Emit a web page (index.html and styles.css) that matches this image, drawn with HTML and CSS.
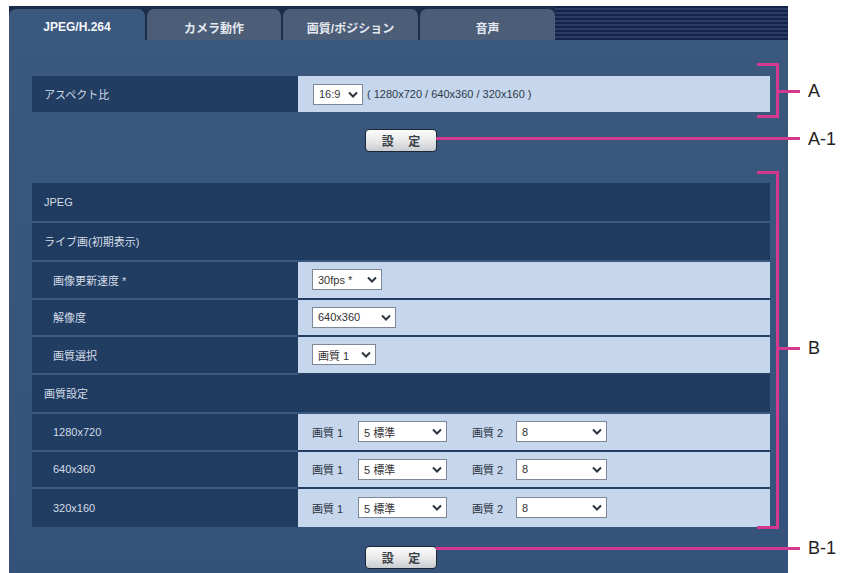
FILE: index.html
```html
<!DOCTYPE html>
<html lang="ja">
<head>
  <meta charset="UTF-8">
  <meta name="viewport" content="width=device-width, initial-scale=1.0">
  <title>JPEG/H.264 設定</title>
  <link rel="stylesheet" href="styles.css">
</head>
<body>
  <div class="page">
    <div class="panel">
      <div class="tabs">
        <div class="tab active">JPEG/H.264</div>
        <div class="tab">カメラ動作</div>
        <div class="tab">画質/ポジション</div>
        <div class="tab">音声</div>
        <div class="stripes"></div>
      </div>

      <div class="body">
        <!-- A: アスペクト比 -->
        <div class="rows">
          <div class="row single">
            <div class="label">アスペクト比</div>
            <div class="value">
              <span class="sel w-aspect">16:9 <svg class="chev" viewBox="0 0 10 7"><path d="M1 1.5 5 5.5 9 1.5"/></svg></span>
              <span class="note">( 1280x720 / 640x360 / 320x160 )</span>
            </div>
          </div>
        </div>
        <div class="actions first"><button class="btn">設 定</button></div>

        <!-- B: JPEG -->
        <div class="rows">
          <div class="row head">JPEG</div>
          <div class="row head">ライブ画(初期表示)</div>
          <div class="row">
            <div class="label sub">画像更新速度 *</div>
            <div class="value"><span class="sel w-fps">30fps * <svg class="chev" viewBox="0 0 10 7"><path d="M1 1.5 5 5.5 9 1.5"/></svg></span></div>
          </div>
          <div class="row">
            <div class="label sub">解像度</div>
            <div class="value"><span class="sel w-res">640x360 <svg class="chev" viewBox="0 0 10 7"><path d="M1 1.5 5 5.5 9 1.5"/></svg></span></div>
          </div>
          <div class="row">
            <div class="label sub">画質選択</div>
            <div class="value"><span class="sel w-q">画質 1 <svg class="chev" viewBox="0 0 10 7"><path d="M1 1.5 5 5.5 9 1.5"/></svg></span></div>
          </div>
          <div class="row head">画質設定</div>
          <div class="row">
            <div class="label sub">1280x720</div>
            <div class="value">
              <span class="qlabel">画質 1</span>
              <span class="sel w-q1">5 標準 <svg class="chev" viewBox="0 0 10 7"><path d="M1 1.5 5 5.5 9 1.5"/></svg></span>
              <span class="qlabel q2">画質 2</span>
              <span class="sel w-q2">8 <svg class="chev" viewBox="0 0 10 7"><path d="M1 1.5 5 5.5 9 1.5"/></svg></span>
            </div>
          </div>
          <div class="row">
            <div class="label sub">640x360</div>
            <div class="value">
              <span class="qlabel">画質 1</span>
              <span class="sel w-q1">5 標準 <svg class="chev" viewBox="0 0 10 7"><path d="M1 1.5 5 5.5 9 1.5"/></svg></span>
              <span class="qlabel q2">画質 2</span>
              <span class="sel w-q2">8 <svg class="chev" viewBox="0 0 10 7"><path d="M1 1.5 5 5.5 9 1.5"/></svg></span>
            </div>
          </div>
          <div class="row last">
            <div class="label sub">320x160</div>
            <div class="value">
              <span class="qlabel">画質 1</span>
              <span class="sel w-q1">5 標準 <svg class="chev" viewBox="0 0 10 7"><path d="M1 1.5 5 5.5 9 1.5"/></svg></span>
              <span class="qlabel q2">画質 2</span>
              <span class="sel w-q2">8 <svg class="chev" viewBox="0 0 10 7"><path d="M1 1.5 5 5.5 9 1.5"/></svg></span>
            </div>
          </div>
        </div>
        <div class="actions second"><button class="btn">設 定</button></div>
      </div>
    </div>

    <!-- 注記の線とラベル -->
    <div class="bracket brk-a"></div>
    <div class="tick tick-a"></div>
    <div class="mark mark-a">A</div>
    <div class="lead lead-a1"></div>
    <div class="mark mark-a1">A-1</div>

    <div class="bracket brk-b"></div>
    <div class="tick tick-b"></div>
    <div class="mark mark-b">B</div>
    <div class="lead lead-b1"></div>
    <div class="mark mark-b1">B-1</div>
  </div>
</body>
</html>
```

FILE: styles.css
```css
body {
  margin: 0;
  background: #fff;
  font-family: "Liberation Sans", "Noto Sans CJK JP", sans-serif;
}
.page {
  position: relative;
  width: 846px;
  height: 573px;
  padding: 6px 0 0 9px;
  box-sizing: border-box;
}
.panel {
  width: 779px;
  background: linear-gradient(#3b597e, #35537a);
  border-bottom: 1px solid #aab5c5;
}

/* タブ */
.tabs {
  display: flex;
  height: 34px;
  background: #1c2c4b;
}
.tab {
  margin-top: 3px;
  display: flex;
  align-items: center;
  justify-content: center;
  padding-top: 5px;
  box-sizing: border-box;
  width: 135px;
  border-radius: 7px 7px 0 0;
  background: #4c5d78;
  color: #e4e9f0;
  font-size: 12px;
  font-weight: bold;
}
.tab + .tab {
  margin-left: 2px;
}
.tab:nth-child(2) {
  width: 134px;
}
.tab.active {
  width: 136px;
  background: #3b597e;
  color: #f4f6fa;
}
.stripes {
  flex: 1;
  background: repeating-linear-gradient(#14234a 0 2px, #2b3d62 2px 4px);
}

/* 本体 */
.body {
  padding: 36px 18px 8px 23px;
}
.rows {
  display: flex;
  flex-direction: column;
}
.row {
  display: flex;
  height: 37.5px;
  font-size: 11px;
  color: #d3dbe6;
}
.row.single {
  height: 36px;
}
.label {
  width: 266px;
  display: flex;
  align-items: center;
  padding-left: 12px;
  box-sizing: border-box;
  background: #213d62;
  border-bottom: 2px solid #3b5a80;
}
.label.sub {
  padding-left: 21px;
}
.value {
  flex: 1;
  display: flex;
  align-items: center;
  padding-left: 14px;
  background: #c6d6ec;
  border-bottom: 2px solid #253f63;
  color: #333;
}
.row.head {
  align-items: center;
  padding-left: 12px;
  background: #203b60;
  border-bottom: 2px solid #3b5a80;
}
.row.single .label,
.row.single .value,
.row.last .label,
.row.last .value {
  border-bottom: none;
}
.row.single .value {
  padding-left: 15px;
}

/* セレクト */
.sel {
  display: inline-flex;
  align-items: center;
  justify-content: space-between;
  height: 21px;
  padding: 0 4px 0 5px;
  box-sizing: border-box;
  background: #fff;
  border: 1px solid #7d8796;
  color: #333;
  font-size: 11px;
}
.chev {
  width: 10px;
  height: 7px;
  fill: none;
  stroke: #2d3540;
  stroke-width: 2;
}
.w-aspect { width: 50px; }
.w-fps { width: 70px; }
.w-res { width: 84px; }
.w-q { width: 64px; }
.w-q1 { width: 89px; }
.w-q2 { width: 91px; }
.note {
  margin-left: 4px;
  color: #2e3a4a;
  font-size: 11px;
}
.qlabel {
  width: 46px;
  font-size: 11px;
  color: #2a3340;
}
.qlabel.q2 {
  width: 44px;
  margin-left: 25px;
}

/* ボタン */
.actions {
  display: flex;
  justify-content: center;
}
.actions.first {
  margin: 17px 0 31px;
}
.actions.second {
  margin-top: 19px;
}
.btn {
  width: 72px;
  height: 23px;
  padding: 0;
  border: 1px solid #1a2536;
  border-radius: 4px;
  background: linear-gradient(#fbfbfb, #ececec 45%, #c9ccd0);
  color: #3a3f46;
  font-family: "Noto Sans CJK JP", sans-serif;
  font-size: 12px;
  font-weight: bold;
  letter-spacing: 6px;
  text-indent: 6px;
}

/* 注記 */
.bracket {
  position: absolute;
  left: 757px;
  width: 19px;
  border: 3px solid #d4398f;
  border-left: none;
}
.brk-a {
  top: 63px;
  height: 49px;
}
.brk-b {
  top: 171px;
  height: 352px;
}
.tick,
.lead {
  position: absolute;
  height: 3px;
  background: #d4398f;
}
.tick {
  left: 779px;
  width: 21px;
}
.tick-a { top: 90px; }
.tick-b { top: 347px; }
.lead {
  left: 436px;
  width: 364px;
}
.lead-a1 { top: 137px; }
.lead-b1 { top: 547px; }
.mark {
  position: absolute;
  left: 808px;
  font-size: 18px;
  line-height: 20px;
  color: #222;
}
.mark-a { top: 81px; }
.mark-a1 { top: 129px; }
.mark-b { top: 338px; }
.mark-b1 { top: 538px; }
```
